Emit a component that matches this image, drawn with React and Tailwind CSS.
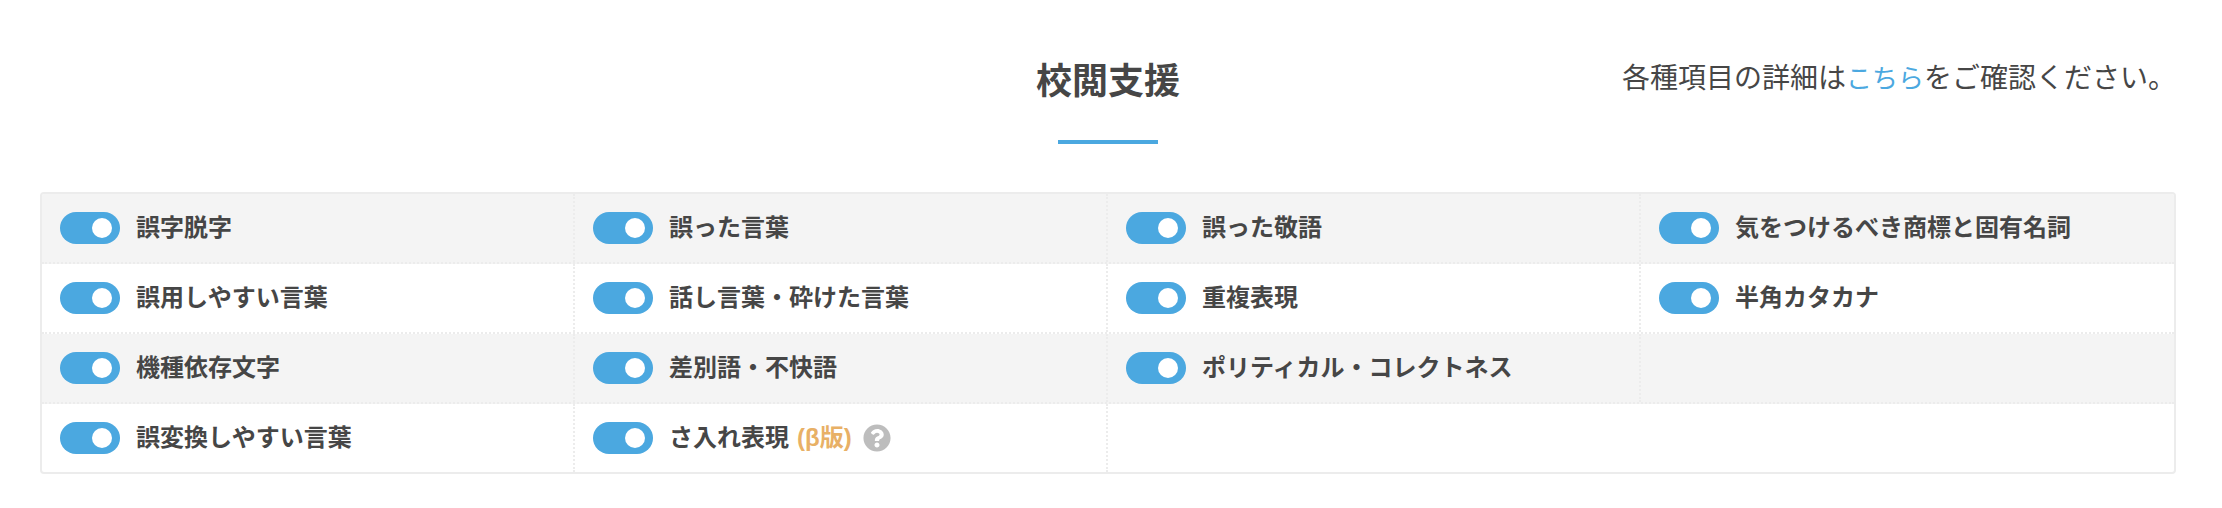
import { FaQuestionCircle } from "react-icons/fa";

const rows = [
  ["誤字脱字", "誤った言葉", "誤った敬語", "気をつけるべき商標と固有名詞"],
  ["誤用しやすい言葉", "話し言葉・砕けた言葉", "重複表現", "半角カタカナ"],
  ["機種依存文字", "差別語・不快語", "ポリティカル・コレクトネス", null],
  ["誤変換しやすい言葉", "さ入れ表現", null],
];

const betaItems = ["さ入れ表現"];

function Toggle({ label }) {
  const beta = betaItems.includes(label);
  return (
    <div className="flex items-center">
      <label className="flex items-center cursor-pointer">
        <input type="checkbox" role="switch" defaultChecked className="peer sr-only" />
        <span
          className="flex h-8 w-[60px] shrink-0 items-center rounded-full bg-gray-300 px-2 transition-colors
                     peer-checked:justify-end peer-checked:bg-[#4ba8e0]"
        >
          <span className="size-5 rounded-full bg-white" />
        </span>
        <span className="ml-4 whitespace-nowrap">
          {label}
          {beta && <span className="ml-2 text-[#e8b066]">(β版)</span>}
        </span>
      </label>
      {beta && (
        <button type="button" aria-label="さ入れ表現について" className="ml-[11px] text-[#bdbdbd]">
          <FaQuestionCircle size={28} />
        </button>
      )}
    </div>
  );
}

export default function App() {
  return (
    <main className="bg-white pr-[46px] pb-8 pl-10 font-['Liberation_Sans','Noto_Sans_CJK_JP',sans-serif] text-[#464646]">
      <header className="grid grid-cols-[1fr_auto_1fr] items-start pt-14">
        <h2 className="col-start-2 flex flex-col items-center text-4xl leading-13 font-bold">
          校閲支援
          <span className="mt-8 h-1 w-[100px] bg-[#4ba8e0]" />
        </h2>
        <p className="text-right text-[28px] leading-[46px]">
          各種項目の詳細は
          <a href="#details" className="text-[26px] text-[#4ba8e0]">こちら</a>
          をご確認ください。
        </p>
      </header>

      <section className="mt-12 overflow-hidden rounded border-2 border-[#ececec] text-2xl leading-8 font-bold">
        {rows.map((row, i) => (
          <div
            key={i}
            className="grid grid-cols-4 border-b-2 border-dotted border-[#ececec] odd:bg-[#f4f4f4] last:border-b-0"
          >
            {row.map((label, j) => (
              <div
                key={j}
                className="flex h-[68px] items-center border-r-2 border-dotted border-[#ececec] px-[18px] last:border-r-0"
              >
                {label && <Toggle label={label} />}
              </div>
            ))}
          </div>
        ))}
      </section>
    </main>
  );
}
